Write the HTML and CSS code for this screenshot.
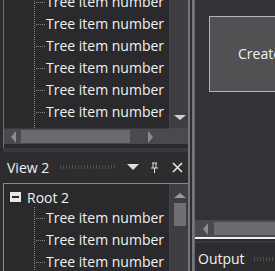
FILE: index.html
```html
<!DOCTYPE html>
<html lang="en">
<head>
    <meta charset="UTF-8">
    <title>Dock Layout</title>
    <link rel="stylesheet" href="styles.css">
</head>
<body>
    <div class="dock">
        <div class="left-column">
            <div class="pane pane-top">
                <div class="tree-view">
                    <ul class="tree shifted">
                        <li class="leaf">Tree item number</li>
                        <li class="leaf">Tree item number</li>
                        <li class="leaf">Tree item number</li>
                        <li class="leaf">Tree item number</li>
                        <li class="leaf">Tree item number</li>
                        <li class="leaf">Tree item number</li>
                        <li class="leaf">Tree item number</li>
                    </ul>
                </div>
                <div class="vscroll">
                    <span class="arrow down"></span>
                </div>
                <div class="hscroll">
                    <span class="arrow left"></span>
                    <span class="thumb"></span>
                    <span class="arrow right"></span>
                </div>
                <div class="corner"></div>
            </div>

            <div class="pane-header">
                <span class="title">View 2</span>
                <span class="grip"></span>
                <span class="btn drop"></span>
                <span class="btn pin">
                    <svg width="9" height="11" viewBox="0 0 9 11"><path d="M2 1h5M3 1v5M6 1v5M1 6h7M4.5 6v5" stroke="#e0e0e0" stroke-width="1" fill="none"/></svg>
                </span>
                <span class="btn close">
                    <svg width="11" height="11" viewBox="0 0 11 11"><path d="M1 1l9 9M10 1l-9 9" stroke="#e6e6e6" stroke-width="1.6"/></svg>
                </span>
            </div>

            <div class="pane pane-bottom">
                <div class="tree-view">
                    <div class="root"><span class="toggle"></span>Root 2</div>
                    <ul class="tree">
                        <li class="leaf">Tree item number</li>
                        <li class="leaf">Tree item number</li>
                        <li class="leaf">Tree item number</li>
                    </ul>
                </div>
                <div class="vscroll">
                    <span class="arrow up"></span>
                    <span class="thumb"></span>
                </div>
            </div>
        </div>

        <div class="splitter"></div>

        <div class="right-column">
            <div class="document">
                <div class="doc-box">Create new document</div>
            </div>
            <div class="hscroll doc-scroll">
                <span class="arrow left"></span>
                <span class="thumb"></span>
            </div>
            <div class="pane-header output">
                <span class="title">Output</span>
                <span class="grip"></span>
            </div>
        </div>
    </div>
</body>
</html>
```

FILE: styles.css
```css
html, body {
    margin: 0;
    padding: 0;
}

body {
    width: 275px;
    height: 271px;
    overflow: hidden;
    background-color: #2d2d30;
    font-family: 'Open Sans', 'Liberation Sans', sans-serif;
    font-size: 14px;
    color: #f1f1f1;
}

.dock {
    display: grid;
    grid-template-columns: 188px 6px 81px;
    height: 271px;
}

.left-column {
    display: flex;
    flex-direction: column;
    padding-left: 2px;
    border-left: 1px solid #2d2d30;
    min-width: 0;
}

/* top pane */
.pane-top {
    display: grid;
    grid-template-columns: 165px 21px;
    grid-template-rows: 128px 16px;
    height: 148px;
    border-left: 1px solid #707074;
    background-color: #2a2a2d;
}

.tree-view {
    overflow: hidden;
}

.tree {
    list-style: none;
    margin: 0;
    padding: 0 0 0 30px;
}

.tree.shifted {
    margin-top: -9px;
}

.leaf {
    height: 22px;
    line-height: 22px;
    padding-left: 12px;
    white-space: nowrap;
    background-image:
        repeating-linear-gradient(to bottom, #8a8a8e 0 1px, transparent 1px 2px),
        repeating-linear-gradient(to right, #8a8a8e 0 1px, transparent 1px 2px);
    background-size: 1px 100%, 9px 1px;
    background-repeat: no-repeat;
    background-position: 0 0, 2px 11px;
}

/* scrollbars */
.vscroll {
    background-color: #3e3e42;
    display: flex;
    flex-direction: column;
    align-items: center;
    border-left: 1px solid #46464a;
}

.pane-top .vscroll {
    justify-content: flex-end;
    padding-bottom: 8px;
}

.hscroll {
    background-color: #4a4a4e;
    display: flex;
    align-items: center;
    padding: 0 6px 0 7px;
}

.pane-top .hscroll {
    border-top: 1px solid #3a3a3e;
}

.corner {
    background-color: #4a4a4e;
}

.hscroll .thumb {
    height: 13px;
    width: 109px;
    background-color: #6b6b6f;
    margin: 0 18px 0 5px;
}

.arrow {
    width: 0;
    height: 0;
    border: 5px solid transparent;
    flex: none;
}

.arrow.left {
    border-right: 5px solid #8c8c90;
    border-left: 0;
    border-top-width: 6px;
    border-bottom-width: 6px;
}

.arrow.right {
    border-left: 5px solid #8c8c90;
    border-right: 0;
    border-top-width: 6px;
    border-bottom-width: 6px;
}

.arrow.down {
    border-top: 5px solid #d0d0d0;
    border-bottom: 0;
    border-left-width: 6px;
    border-right-width: 6px;
}

.arrow.up {
    border-bottom: 5px solid #9a9a9e;
    border-top: 0;
    border-left-width: 6px;
    border-right-width: 6px;
    margin-top: 9px;
}

/* pane header */
.pane-header {
    display: flex;
    align-items: center;
    height: 33px;
    padding: 1px 0 0 4px;
    box-sizing: border-box;
    background-color: #2d2d30;
    border-top: 4px solid #3a3a3e;
}

.pane-header .title {
    flex: none;
}

.pane-header .grip {
    width: 57px;
    height: 4px;
    margin-left: 10px;
    background-image: radial-gradient(circle, #505053 0.7px, transparent 0.8px);
    background-size: 3px 2px;
}

.btn {
    display: flex;
    align-items: center;
    justify-content: center;
    width: 22px;
    height: 16px;
}

.btn.drop {
    margin-left: 7px;
}

.btn.drop::before {
    content: "";
    border-top: 6px solid #e0e0e0;
    border-left: 6px solid transparent;
    border-right: 6px solid transparent;
}

.btn.close {
    margin-left: 1px;
}

/* bottom pane */
.pane-bottom {
    flex: 1;
    display: grid;
    grid-template-columns: 165px 21px;
    margin-top: 2px;
    border-top: 1px solid #8a8a8e;
    border-left: 1px solid #8a8a8e;
    background-color: #2a2a2d;
}

.pane-bottom .tree-view {
    padding-top: 1px;
}

.root {
    display: flex;
    align-items: center;
    height: 24px;
    padding-left: 6px;
}

.toggle {
    width: 11px;
    height: 10px;
    margin-right: 6px;
    background-color: #e8e8e8;
    position: relative;
}

.toggle::after {
    content: "";
    position: absolute;
    left: 2px;
    right: 2px;
    top: 4px;
    height: 2px;
    background-color: #2a2a2d;
}

.pane-bottom .tree {
    margin-top: -2px;
}

.pane-bottom .vscroll .thumb {
    width: 12px;
    height: 23px;
    margin-top: 5px;
    background-color: #707074;
}

/* splitter */
.splitter {
    background-color: #2d2d30;
    border-left: 2px solid #77777b;
    border-right: 2px solid #77777b;
    box-sizing: border-box;
}

/* document area */
.right-column {
    display: flex;
    flex-direction: column;
    border-left: 1px solid #6a6a6e;
    min-width: 0;
    overflow: hidden;
}

.document {
    flex: 1;
    background-color: #333337;
    padding: 16px 0 0 14px;
    overflow: hidden;
}

.doc-box {
    height: 74px;
    width: 160px;
    border: 1px solid #b4b4b8;
    background-color: #515154;
    padding-left: 28px;
    line-height: 74px;
    white-space: nowrap;
}

.doc-scroll {
    height: 17px;
    padding: 0 0 0 8px;
    margin-bottom: 2px;
    border-bottom: 2px solid #f0f0f0;
}

.doc-scroll .thumb {
    width: 100px;
    margin: 0 0 0 6px;
}

.pane-header.output {
    height: 32px;
    border-top: 2px solid #3a3a3e;
    padding-left: 3px;
}

.output .grip {
    margin-left: 8px;
}
```
